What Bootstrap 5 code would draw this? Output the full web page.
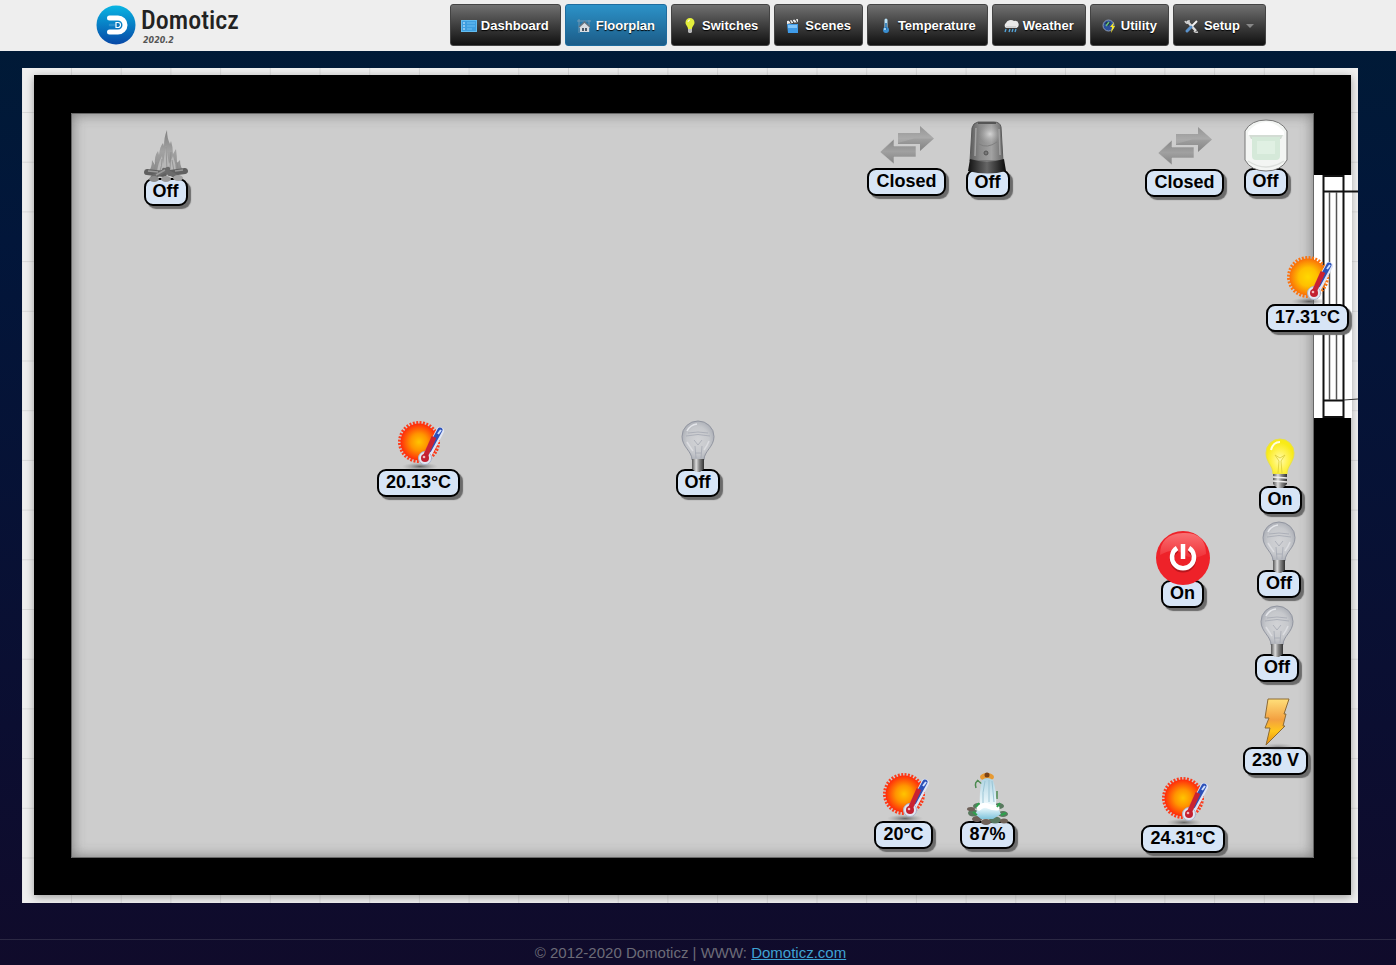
<!DOCTYPE html>
<html lang="en">
<head>
<meta charset="utf-8">
<meta name="viewport" content="width=device-width, initial-scale=1">
<title>Domoticz</title>
<link href="https://cdn.jsdelivr.net/npm/bootstrap@5.3.0/dist/css/bootstrap.min.css" rel="stylesheet">
<style>
  body { font-family: "Liberation Sans", Arial, sans-serif; background: linear-gradient(#001b36, #02163a 25%, #0b0e31 75%, #100b2b) #0e0c2b; }
  .topbar { background: #eee; height: 51px; padding: 4px 34px 5px 0; }
  .topbar-inner { max-width: 1170px; }
  .brand-name { font-family: "Roboto Condensed", "Open Sans Condensed", "Liberation Sans Narrow", "DejaVu Sans Condensed", sans-serif; font-size: 26px; line-height: 33px; color: #222; font-weight: 500; }
  .brand-version { font-family: "DejaVu Sans", sans-serif; font-size: 8px; line-height: 8px; font-style: italic; font-weight: bold; color: #555; padding-left: 2px; }
  .menu-btn { height: 42px; padding: 1px 11px 0 10px; font-size: 13px; font-weight: bold; color: #fff; border: 1px solid #444; border-radius: 3px; background: linear-gradient(#707070, #444 45%, #111); gap: 4px; text-shadow: 0 1px 1px #000; }
  .menu-btn:hover, .menu-btn:focus { color: #fff; background: linear-gradient(#808080, #555 45%, #222); }
  .menu-btn.active { color: #fff; border-color: #1f6c9e; background: linear-gradient(#2c92c8, #1c5c88); }
  .menu-btn svg { width: 16px; height: 16px; }
  .menu-btn.dropdown-toggle::after { flex: none; margin-left: 2px; border: 4px solid transparent; border-top-color: #888; border-bottom: 0; }
  .plan-area { padding: 17px 38px 36px 22px; }
  .plan-drawing { width: 100%; height: auto; }
  .device { position: absolute; left: calc(var(--x) / 1336 * 100%); top: calc(var(--y) / 835 * 100%); width: 90px; margin-left: -45px; padding: 0; border: 0; background: none; color: #000; }
  .device svg { width: 54px; height: 54px; position: relative; z-index: 1; }
  .device-state { margin-top: -5px; height: 28px; line-height: 23px; padding: 0 7px; border: 2px solid #000; border-radius: 9px; background: #d7e5f6; box-shadow: 3px 3px 1px #6b6b6b; font-size: 18px; font-weight: bold; white-space: nowrap; }
  .page-foot { border-top: 1px solid #2b2843; color: #6c6b78; font-size: 15px; line-height: 25px; padding-right: 15px; }
  .page-foot a { color: #3fa2d3; }
</style>
</head>
<body class="d-flex flex-column min-vh-100">

<svg width="0" height="0" class="position-absolute" aria-hidden="true">
  <defs>
    <radialGradient id="hot"><stop offset="0" stop-color="#ffc400"/><stop offset=".45" stop-color="#ff9500"/><stop offset="1" stop-color="#ff2a0c"/></radialGradient>
    <radialGradient id="mild"><stop offset="0" stop-color="#ffd800"/><stop offset=".5" stop-color="#ffc000"/><stop offset="1" stop-color="#fa7008"/></radialGradient>
    <radialGradient id="soft"><stop offset="0" stop-color="#444" stop-opacity=".75"/><stop offset="1" stop-color="#888" stop-opacity="0"/></radialGradient>
    <radialGradient id="glass" cx=".5" cy=".5"><stop offset="0" stop-color="#d2d3d6"/><stop offset=".7" stop-color="#c6c8cc"/><stop offset="1" stop-color="#b0b3ba"/></radialGradient>
    <radialGradient id="lit" cx=".5" cy=".6"><stop offset="0" stop-color="#fffbb0"/><stop offset=".5" stop-color="#fff35a"/><stop offset="1" stop-color="#f8ea18"/></radialGradient>
    <linearGradient id="metal"><stop offset="0" stop-color="#555"/><stop offset=".35" stop-color="#ddd"/><stop offset=".6" stop-color="#888"/><stop offset="1" stop-color="#333"/></linearGradient>
    <linearGradient id="arrow" x2="0" y2="1"><stop offset="0" stop-color="#868686"/><stop offset=".5" stop-color="#a0a0a0"/><stop offset="1" stop-color="#828282"/></linearGradient>
    <linearGradient id="dome"><stop offset="0" stop-color="#5c5c5c"/><stop offset=".3" stop-color="#8a8a8a"/><stop offset=".65" stop-color="#a2a2a2"/><stop offset="1" stop-color="#6a6a6a"/></linearGradient>
    <linearGradient id="dark"><stop offset="0" stop-color="#111"/><stop offset=".5" stop-color="#666"/><stop offset="1" stop-color="#0a0a0a"/></linearGradient>
    <radialGradient id="glint"><stop offset="0" stop-color="#d4d4d4"/><stop offset="1" stop-color="#aaa" stop-opacity="0"/></radialGradient>
    <linearGradient id="bolt" x2="0" y2="1"><stop offset="0" stop-color="#ffdf7a"/><stop offset=".45" stop-color="#f3a040"/><stop offset=".7" stop-color="#ffc71c"/><stop offset="1" stop-color="#e68a10"/></linearGradient>
    <linearGradient id="flame" x2="0" y2="1"><stop offset="0" stop-color="#808080"/><stop offset=".5" stop-color="#a2a2a2"/><stop offset="1" stop-color="#8a8a8a"/></linearGradient>
    <linearGradient id="shine" x2="0" y2="1"><stop offset="0" stop-color="#ff9a9a"/><stop offset="1" stop-color="#f23a40"/></linearGradient>
    <linearGradient id="brand" x2="0" y2="1"><stop offset="0" stop-color="#08b5e3"/><stop offset="1" stop-color="#0747a6"/></linearGradient>
    <linearGradient id="water" x2="0" y2="1"><stop offset="0" stop-color="#aed3e2"/><stop offset=".7" stop-color="#f4fdff"/><stop offset="1" stop-color="#7fc4dc"/></linearGradient>
  </defs>

  <symbol id="thermo" viewBox="0 0 54 54">
    <path d="M48 11 35 36" stroke="#dfe5f5" stroke-width="8" stroke-linecap="round"/>
    <circle cx="33" cy="38" r="6.500" fill="#e4e8f3" stroke="#a9b3cb"/>
    <path d="M48 10 37 30" stroke="#2b50b8" stroke-width="5" stroke-linecap="round"/>
    <path d="m49 10-3 4" stroke="#cfe0ff" stroke-width="2"/>
    <path d="M42 17 33 37" stroke="#c92232" stroke-width="5"/>
    <circle cx="33" cy="38" r="4" fill="#c32030"/><circle cx="32" cy="37" r="1.300" fill="#f4b8bd"/>
  </symbol>
  <symbol id="temp-warm" viewBox="0 0 54 54">
    <ellipse cx="28" cy="46.500" rx="18" ry="4" fill="url(#soft)"/>
    <circle cx="27" cy="22" r="19" fill="none" stroke="#fb3c1c" stroke-width="4" stroke-dasharray="1.900 1.416"/>
    <circle cx="27" cy="22" r="18.500" fill="url(#hot)"/><use href="#thermo"/>
  </symbol>
  <symbol id="temp-mild" viewBox="0 0 54 54">
    <ellipse cx="28" cy="46.500" rx="18" ry="4" fill="url(#soft)"/>
    <circle cx="27" cy="22" r="19" fill="none" stroke="#fa7412" stroke-width="4" stroke-dasharray="1.900 1.416"/>
    <circle cx="27" cy="22" r="18.500" fill="url(#mild)"/><use href="#thermo"/>
  </symbol>
  <symbol id="bulb-off" viewBox="0 0 54 54">
    <path d="M21 40C21 31 11 27 11 16.500a16 15.500 0 0 1 32 0C43 27 33 31 33 40z" fill="url(#glass)" stroke="#9195a0"/>
    <path d="M15 16q12-3 24 0M17 13q10-2 20 0M25 38l-1-12M30 38l1-12M23 20l4 5 4-5M24 33h6" fill="none" stroke="#a4a8b2" stroke-width=".8"/>
    <path d="M16 11q3-6 10-7" fill="none" stroke="#e4e6ea" stroke-width="1.500"/>
    <path d="M16 22q3 5 6 9M38 21q-2 5-5 9" stroke="#dcdde1" stroke-width="1.500" fill="none"/>
    <path d="M21 39h12v10l-4 3h-4l-4-3z" fill="url(#metal)"/>
  </symbol>
  <symbol id="bulb-on" viewBox="0 0 54 54">
    <path d="M20 37c0-8-7-12-7-21a14 14 0 0 1 28 0c0 9-7 13-7 21z" fill="url(#lit)" stroke="#e8e04a"/>
    <path d="m25 36 1-12-4-6 5 3 5-3-4 6 1 12" fill="none" stroke="#d9cb3a" stroke-width=".8"/>
    <path d="M18 13q2-8 9-8" fill="none" stroke="#fffde0" stroke-width="2"/>
    <path d="M20 37h14v10l-4 4h-6l-4-4z" fill="url(#metal)"/><path d="m20 40 14 1M20 44l14 1" stroke="#eee" stroke-width="1.500"/>
  </symbol>
  <symbol id="contact" viewBox="0 0 54 54">
    <path d="M18 14h22V7l14 12.500L40 32v-7H18z" fill="url(#arrow)"/>
    <path d="M36 27H14v-7L0 33l14 12v-7h22z" fill="url(#arrow)" stroke="#cdcdcd" stroke-width=".6"/>
    <path d="M18 14h22V7l14 12.500H34L18 24z" fill="#fff" opacity=".12"/>
  </symbol>
  <symbol id="siren" viewBox="0 0 54 54">
    <path d="M11 8q1-5 6-6h16q6 0 7 5l2 34H9z" fill="url(#dome)" stroke="#5b5b5b"/>
    <path d="M17 3h18" stroke="#555" stroke-width="2"/><ellipse cx="29" cy="14" rx="11" ry="10" fill="url(#glint)"/>
    <path d="M15 8l-1 28M38 9l1 26" stroke="#a2a2a2" stroke-width="1.500"/><circle cx="25" cy="33" r="2" fill="#777" stroke="#555"/>
    <path d="M18 24q8 5 18-2" stroke="#808080" fill="none"/>
    <path d="M9 39q17 5 34 0l2 12q-18 5-38 0z" fill="url(#dark)"/>
  </symbol>
  <symbol id="motion" viewBox="0 0 54 54">
    <path d="M6 12Q12 1 27 1t21 11v29Q42 52 27 52T6 41z" fill="#f3f5f3" stroke="#777"/>
    <path d="M9 13Q17 3 27 3t18 10v3H9z" fill="#fff"/>
    <path d="M10 16h34l-2 4H12z" fill="#d3dcd4"/><path d="M13 18h28v19q0 4-4 4H17q-4 0-4-4z" fill="#d5e9d9"/>
    <path d="M18 22h18v13H18z" fill="#e0f0e3"/><path d="M9 42q18 12 36 0" stroke="#dcdfdc" stroke-width="1.500" fill="none"/>
  </symbol>
  <symbol id="fire" viewBox="0 0 54 54">
    <path d="M9 44q4-5 4-13l3 5q-1-9 3-14l1 4q1-9 4-12l1 3Q25 8 28 1q0 8 3 14l1-3q2 6 2 13l3-5q1 7 1 14l3-3q0 8 5 13z" fill="url(#flame)"/>
    <path d="M18 43q1-9 5-16l1 8 3-18 3 18 4-8q3 8 3 16" fill="#b8b8b8"/>
    <path d="M21 42q2-5 2-12M28 42l-1-24M35 42l-2-11M15 42l2-9M39 42l-1-9M31 40l1-17" stroke="#8c8c8c" fill="none" stroke-width=".8"/>
    <path d="m8 43 17 2M31 44l15-2" stroke="#606060" stroke-width="6" stroke-linecap="round"/>
    <path d="m14 48 15-8M25 41l15 8" stroke="#6b6b6b" stroke-width="4.500" stroke-linecap="round"/>
    <path d="m9 42 10 1M36 42l8-1M17 46l9-5" stroke="#999" stroke-width="1.500"/>
    <ellipse cx="15" cy="50" rx="5" ry="3" fill="#8a8a8a"/><ellipse cx="27" cy="50" rx="5" ry="3" fill="#999"/><ellipse cx="39" cy="49" rx="5" ry="3" fill="#a3a3a3"/>
  </symbol>
  <symbol id="power" viewBox="0 0 54 54">
    <circle cx="27" cy="27" r="27" fill="#ee2229"/>
    <path d="M4 24Q4 3 27 2t23 21Q36 30 27 23T4 24z" fill="url(#shine)" opacity=".65"/>
    <path d="M21 18a11 11 0 1 0 12 0" fill="none" stroke="#b8161d" stroke-width="4.500" transform="translate(0 1)"/>
    <path d="M21 17a11 11 0 1 0 12 0" fill="none" stroke="#fff" stroke-width="4.500"/>
    <path d="M27 13v15" stroke="#fff" stroke-width="4.500"/>
  </symbol>
  <symbol id="volt" viewBox="0 0 54 54">
    <ellipse cx="29" cy="49" rx="18" ry="4" fill="url(#soft)" opacity=".6"/>
    <path d="M19 1h21l-5 15h2l-3 12h2L17 47l4-17h-5l4-10h-4z" fill="url(#bolt)" stroke="#8c6a35"/>
  </symbol>
  <symbol id="waterfall" viewBox="0 0 54 54">
    <path d="M18 9q-5 0-3 7M36 19v8M16 8l5 4" stroke="#4c8a50" stroke-width="1.500" fill="none"/>
    <ellipse cx="26" cy="5" rx="7" ry="4" fill="#e79a33"/><circle cx="26" cy="3" r="2.500" fill="#7b4216"/>
    <g fill="#59795f"><ellipse cx="12" cy="41" rx="5" ry="3.500"/><ellipse cx="17" cy="34" rx="5" ry="3"/><ellipse cx="38" cy="34" rx="5" ry="3"/><ellipse cx="42" cy="42" rx="5" ry="3"/><ellipse cx="34" cy="48" rx="6" ry="3.500"/></g>
    <g fill="#6e6058"><ellipse cx="10" cy="37" rx="4" ry="2"/><ellipse cx="16" cy="47" rx="5" ry="3"/><ellipse cx="25" cy="50" rx="5" ry="3"/><ellipse cx="43" cy="49" rx="4" ry="2.500"/></g>
    <path d="M21 8q5-4 11 0 4 12 3 25l5 9-8 5H20l-6-5 5-8q-1-14 2-26z" fill="url(#water)"/>
    <path d="M24 9q-3 12-2 22M28 8v22M31 9l2 21" stroke="#9cc6d6" fill="none"/>
    <path d="M18 36q5-4 9-2t9 2" stroke="#fff" stroke-width="5" fill="none" stroke-linecap="round"/>
    <path d="m18 31-3 4M39 31l-3 4M40 43l5-2M12 40l4 3" stroke="#2ca34b" stroke-width="2"/>
  </symbol>
</svg>

<header class="topbar">
  <div class="topbar-inner mx-auto d-flex justify-content-between">
    <a href="#" class="d-flex gap-1 text-decoration-none" aria-label="Domoticz home">
      <svg width="41" height="41" viewBox="0 0 41 41"><circle cx="20" cy="21" r="19.500" fill="url(#brand)"/><path d="M13.500 14H22a7 7 0 0 1 0 14h-8.500" fill="none" stroke="#fff" stroke-width="5" stroke-linecap="round"/><path d="M14 21h7" stroke="#fff" stroke-width="2.500" stroke-linecap="round" opacity=".15"/><path d="M20 18.500v5h2a2.500 2.500 0 0 0 0-5z" fill="#0873bb" stroke="#fff" stroke-width="1.200"/></svg>
      <span class="d-flex flex-column"><span class="brand-name">Domoticz</span><span class="brand-version">2020.2</span></span>
    </a>
    <nav class="d-flex gap-1" aria-label="Main">
      <a href="#" class="btn menu-btn d-flex align-items-center"><svg viewBox="0 0 16 16"><path d="M0 2h16v12H0z" fill="#63bdf0"/><path d="M1 3h14v10H1z" fill="#3f9fe0"/><path d="M2 5h2M2 8h2M2 11h2" stroke="#d8f0ff" stroke-width="1.200"/><path d="M6 5h8M6 8h8M6 11h5" stroke="#6cc0f2"/></svg>Dashboard</a>
      <a href="#" class="btn menu-btn active d-flex align-items-center" aria-current="page"><svg viewBox="0 0 16 16"><path d="M1 3h14M3 1v14M13 2v12" stroke="#7fa0b8" stroke-width=".8"/><path d="M3 9 8.500 4 14 9l-1 1v4H4v-4z" fill="#d9dde2"/><path d="m3 9 5.500-5L14 9" fill="none" stroke="#66727e" stroke-width="1.500"/><path d="M6 10h2v3H6zM9 10h2v3H9z" fill="#4c5966"/></svg>Floorplan</a>
      <a href="#" class="btn menu-btn d-flex align-items-center"><svg viewBox="0 0 16 16"><path d="M6 11C6 8 3.500 7.500 3.500 4.500a4.500 4.500 0 0 1 9 0C12.500 7.500 10 8 10 11z" fill="#e3ee3c"/><path d="M6 4q0-2 2-2" stroke="#fff" fill="none"/><path d="M6 11h4v3l-1 1H7l-1-1z" fill="#b9b9b9"/></svg>Switches</a>
      <a href="#" class="btn menu-btn d-flex align-items-center"><svg viewBox="0 0 16 16"><path d="M2 6h11v9H3z" fill="#3f9be8"/><path d="M3 7h9v3H3z" fill="#80c5fa"/><path d="m2 3 11-2v3L2 6z" fill="#eee"/><path d="m4 2 2 3M7 2l2 3M10 1l2 3" stroke="#333"/></svg>Scenes</a>
      <a href="#" class="btn menu-btn d-flex align-items-center"><svg viewBox="0 0 16 16"><path d="M8 2v9" stroke="#b9e1f7" stroke-width="3" stroke-linecap="round"/><circle cx="8" cy="12" r="3" fill="#3a8ed0"/><path d="M8 5v7" stroke="#1d6cae" stroke-width="1.500"/><circle cx="7" cy="11" r="1" fill="#c5e9ff"/></svg>Temperature</a>
      <a href="#" class="btn menu-btn d-flex align-items-center"><svg viewBox="0 0 16 16"><path d="M3 10a3 3 0 0 1 0-5 5 4 0 0 1 8-2 3.500 3.500 0 0 1 2 7z" fill="#e9e9e9"/><path d="M3 9h10" stroke="#bbb"/><path d="m3 11-1 3M7 11l-1 3M10 11l-1 3M13 11l-1 3" stroke="#55a9df" stroke-width="1.300"/></svg>Weather</a>
      <a href="#" class="btn menu-btn d-flex align-items-center"><svg viewBox="0 0 16 16"><circle cx="7.500" cy="7.500" r="5.500" fill="#2c4f9a" stroke="#8c9bb4"/><path d="M4 5q3-2 6 0l-3 3z" fill="#1c2c3a"/><path d="m5 8 3-4" stroke="#6bc07a" stroke-width="1.500"/><path d="m13 4-4 5h2l-1 6 4-7h-2z" fill="#f7e62d"/></svg>Utility</a>
      <div class="dropdown">
        <button type="button" class="btn menu-btn dropdown-toggle d-flex align-items-center" data-bs-toggle="dropdown" aria-expanded="false"><svg viewBox="0 0 16 16"><path d="m3 3 9 10" stroke="#ddd" stroke-width="2.500"/><path d="m13 3-6 6" stroke="#f3f3f3" stroke-width="2"/><path d="m7 9-4 4" stroke="#5a92cc" stroke-width="3" stroke-linecap="round"/><path d="M1 3q1 3 4 2V2M10 13q1 2 4 1" stroke="#ccc" stroke-width="1.500" fill="none"/></svg>Setup</button>
        <ul class="dropdown-menu"><li><a class="dropdown-item" href="#">Settings</a></li></ul>
      </div>
    </nav>
  </div>
</header>

<main class="plan-area">
  <div class="position-relative">
    <svg class="plan-drawing d-block" viewBox="0 0 1336 835" role="img" aria-label="Room plan">
      <defs>
        <pattern id="grid" x="49" y="44" width="49.700" height="49.700" patternUnits="userSpaceOnUse"><path d="M.5 0v50M0 .5h50" stroke="#dadada" fill="none"/></pattern>
        <filter id="blur" x="-5%" y="-5%" width="110%" height="110%"><feGaussianBlur stdDeviation="4"/></filter>
        <filter id="wide-blur" x="-5%" y="-5%" width="110%" height="110%"><feGaussianBlur stdDeviation="7"/></filter>
        <clipPath id="room"><path d="M49 45h1243v745H49z"/></clipPath>
      </defs>
      <path d="M0 0h1336v835H0z" fill="#efefef"/>
      <path d="M0 0h1336v835H0z" fill="url(#grid)"/>
      <path d="M12 9h1317v820H12z" fill="#555" opacity=".55" filter="url(#blur)"/>
      <path d="M12 7h1317v820H12z" fill="#000"/>
      <path d="M49 45h1243v745H49z" fill="#cdcdcd"/>
      <g clip-path="url(#room)"><path d="M41 37h1259v761H41z" fill="none" stroke="#444" stroke-width="18" opacity=".6" filter="url(#wide-blur)"/></g>
      <path d="M49.500 45.500h1242v744h-1242z" fill="none" stroke="#666"/>
      <path d="M1292 107h38v243h-38z" fill="#fff"/>
      <path d="M1301.500 107v243M1321.500 107v243M1301 123.500h35M1301 332.500h21M1301 349h21M1301 108h21" stroke="#111" stroke-width="2" fill="none"/>
      <path d="M1307.500 124v208M1314.500 124v208" stroke="#555" stroke-width="1.500"/><path d="m1322 332 14-1" stroke="#333"/>
    </svg>

    <button type="button" class="device d-flex flex-column align-items-center" style="--x:143.5;--y:61"><svg><use href="#fire"/></svg><span class="device-state">Off</span></button>
    <div class="device d-flex flex-column align-items-center" style="--x:884.5;--y:51"><svg><use href="#contact"/></svg><span class="device-state">Closed</span></div>
    <button type="button" class="device d-flex flex-column align-items-center" style="--x:965.5;--y:52"><svg><use href="#siren"/></svg><span class="device-state">Off</span></button>
    <div class="device d-flex flex-column align-items-center" style="--x:1162.5;--y:52"><svg><use href="#contact"/></svg><span class="device-state">Closed</span></div>
    <div class="device d-flex flex-column align-items-center" style="--x:1243.5;--y:51"><svg><use href="#motion"/></svg><span class="device-state">Off</span></div>
    <div class="device d-flex flex-column align-items-center" style="--x:1285.5;--y:187"><svg><use href="#temp-mild"/></svg><span class="device-state">17.31°C</span></div>
    <div class="device d-flex flex-column align-items-center" style="--x:396.5;--y:352"><svg><use href="#temp-warm"/></svg><span class="device-state">20.13°C</span></div>
    <button type="button" class="device d-flex flex-column align-items-center" style="--x:675.5;--y:352"><svg><use href="#bulb-off"/></svg><span class="device-state">Off</span></button>
    <button type="button" class="device d-flex flex-column align-items-center" style="--x:1258;--y:369"><svg><use href="#bulb-on"/></svg><span class="device-state">On</span></button>
    <button type="button" class="device d-flex flex-column align-items-center" style="--x:1257;--y:453"><svg><use href="#bulb-off"/></svg><span class="device-state">Off</span></button>
    <button type="button" class="device d-flex flex-column align-items-center" style="--x:1160.5;--y:463"><svg><use href="#power"/></svg><span class="device-state">On</span></button>
    <button type="button" class="device d-flex flex-column align-items-center" style="--x:1255;--y:537"><svg><use href="#bulb-off"/></svg><span class="device-state">Off</span></button>
    <div class="device d-flex flex-column align-items-center" style="--x:1253.5;--y:630"><svg><use href="#volt"/></svg><span class="device-state">230 V</span></div>
    <div class="device d-flex flex-column align-items-center" style="--x:881.5;--y:704"><svg><use href="#temp-warm"/></svg><span class="device-state">20°C</span></div>
    <div class="device d-flex flex-column align-items-center" style="--x:965.5;--y:704"><svg><use href="#waterfall"/></svg><span class="device-state">87%</span></div>
    <div class="device d-flex flex-column align-items-center" style="--x:1161;--y:708"><svg><use href="#temp-warm"/></svg><span class="device-state">24.31°C</span></div>
  </div>
</main>

<footer class="page-foot mt-auto text-center">© 2012-2020 Domoticz | WWW: <a href="#">Domoticz.com</a></footer>

<script src="https://cdn.jsdelivr.net/npm/bootstrap@5.3.0/dist/js/bootstrap.bundle.min.js"></script>
</body>
</html>
